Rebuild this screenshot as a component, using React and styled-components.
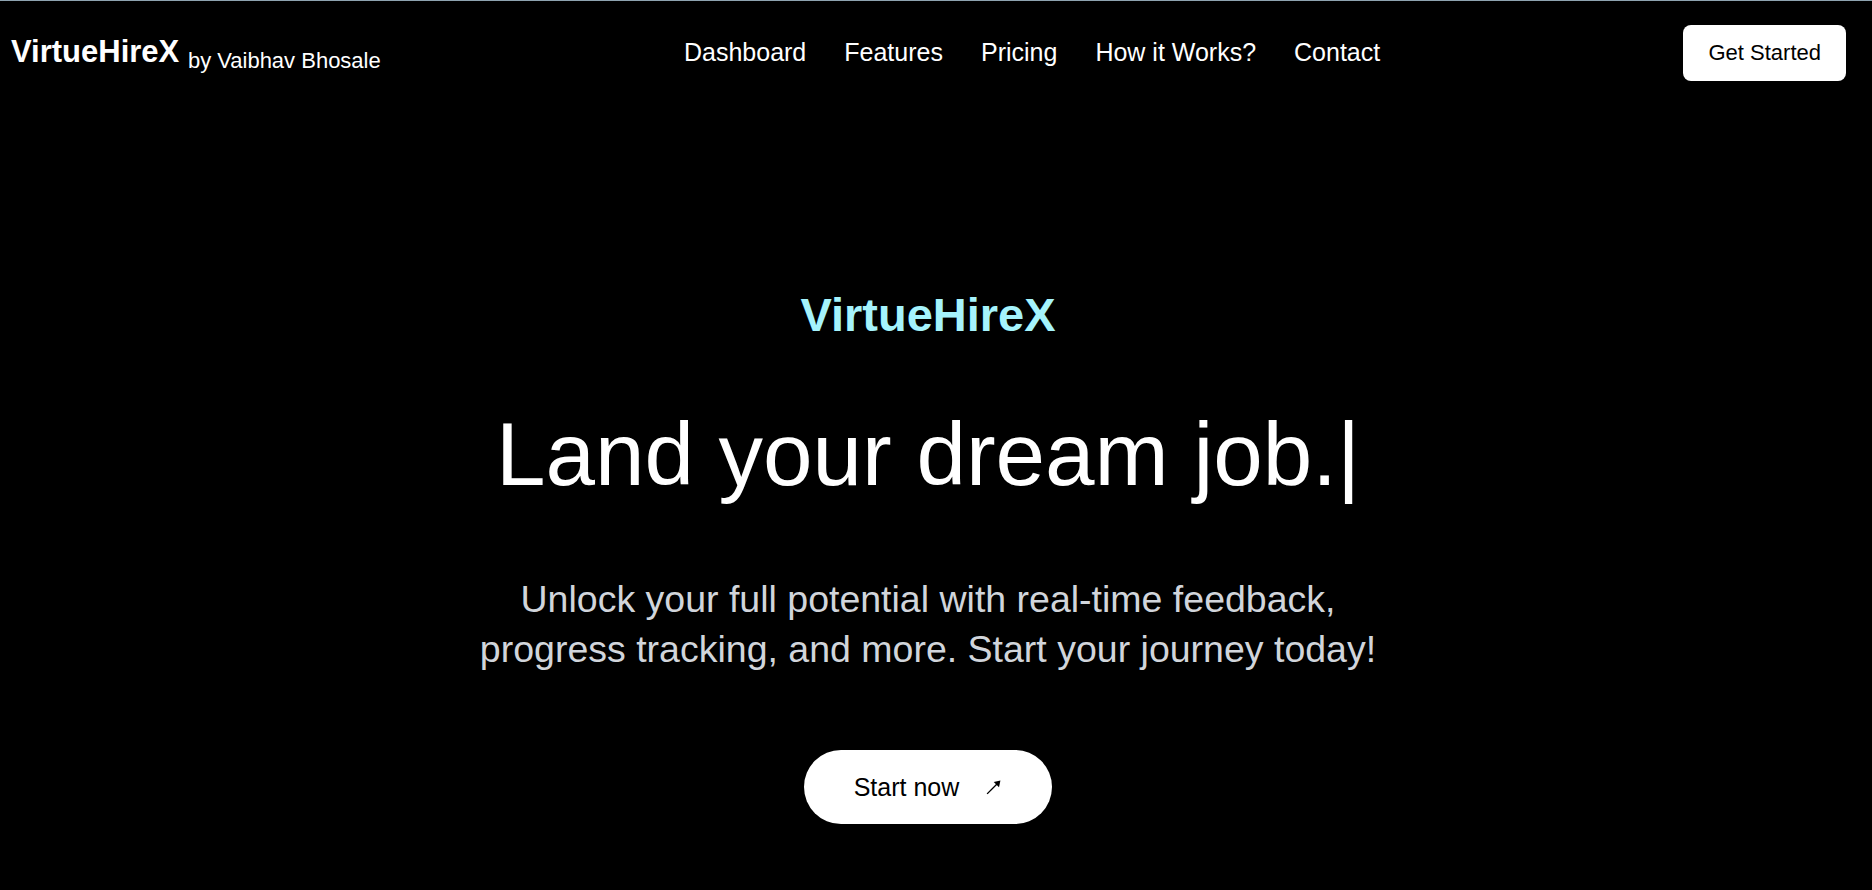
import React from 'react';
import styled, { createGlobalStyle } from 'styled-components';

const GlobalStyle = createGlobalStyle`
    html, body {
        margin: 0;
        padding: 0;
        background: #000;
    }
    body {
        font-family: "Liberation Sans", Arial, Helvetica, sans-serif;
        color: #fff;
        border-top: 1px solid #8ea3b0;
        min-height: 100vh;
        box-sizing: border-box;
    }
`;

const links = ['Dashboard', 'Features', 'Pricing', 'How it Works?', 'Contact'];

function App() {
    return (
        <Page>
            <GlobalStyle />
            <Header>
                <Brand>
                    VirtueHireX <Byline>by Vaibhav Bhosale</Byline>
                </Brand>
                <Nav>
                    {links.map((l) => (
                        <NavLink key={l} href="#">{l}</NavLink>
                    ))}
                </Nav>
                <GetStarted>Get Started</GetStarted>
            </Header>

            <Hero>
                <Eyebrow>VirtueHireX</Eyebrow>
                <Headline>
                    Land your dream job.<Caret>|</Caret>
                </Headline>
                <Lead>
                    Unlock your full potential with real-time feedback, progress
                    tracking, and more. Start your journey today!
                </Lead>
                <StartButton>
                    Start now
                    <ArrowIcon viewBox="0 0 16 16" aria-hidden="true">
                        <line x1="2" y1="14" x2="12" y2="4" />
                        <polygon points="14.5,1.5 8.2,2.8 13.2,7.8" />
                    </ArrowIcon>
                </StartButton>
            </Hero>
        </Page>
    );
}

export default App;

// styled-components

const Page = styled.div`
    width: calc(100% - 16px);
`;

const Header = styled.header`
    display: flex;
    align-items: center;
    justify-content: space-between;
    padding: 24px 10px 25px 11px;
`;

const Brand = styled.h1`
    margin: 0;
    font-size: 31px;
    font-weight: 700;
    line-height: 36px;
    white-space: nowrap;
`;

const Byline = styled.span`
    font-size: 22px;
    font-weight: 400;
    line-height: 1;
    vertical-align: -6px;
`;

const Nav = styled.nav`
    display: flex;
    align-items: center;
    gap: 38px;
`;

const NavLink = styled.a`
    color: #fff;
    text-decoration: none;
    font-size: 25px;
    line-height: 1.15;
    white-space: nowrap;
`;

const GetStarted = styled.button`
    font-family: inherit;
    font-size: 22px;
    line-height: 25.7px;
    padding: 15px 25px;
    background: #fff;
    color: #000;
    border: none;
    border-radius: 8px;
    cursor: pointer;
`;

const Hero = styled.section`
    display: flex;
    flex-direction: column;
    align-items: center;
    text-align: center;
    padding-top: 182px;
`;

const Eyebrow = styled.h2`
    margin: 0 0 62px;
    font-size: 47px;
    font-weight: 700;
    line-height: 54px;
    color: #a5f3fc;
`;

const Headline = styled.h1`
    margin: 0 0 70px;
    font-size: 89px;
    font-weight: 400;
    line-height: 100px;
    color: #fff;
    white-space: nowrap;
`;

const Caret = styled.span`
    font-weight: 300;
`;

const Lead = styled.p`
    margin: 0 0 76px;
    max-width: 940px;
    font-size: 37.5px;
    line-height: 50px;
    color: #d1d5db;
`;

const StartButton = styled.button`
    display: inline-flex;
    align-items: center;
    gap: 26px;
    font-family: inherit;
    font-size: 25px;
    line-height: 30px;
    padding: 22px 50px;
    background: #fff;
    color: #000;
    border: none;
    border-radius: 999px;
    cursor: pointer;
`;

const ArrowIcon = styled.svg`
    width: 17px;
    height: 17px;
    margin-top: 2px;
    line {
        stroke: #000;
        stroke-width: 1.3;
    }
    polygon {
        fill: #000;
    }
`;
